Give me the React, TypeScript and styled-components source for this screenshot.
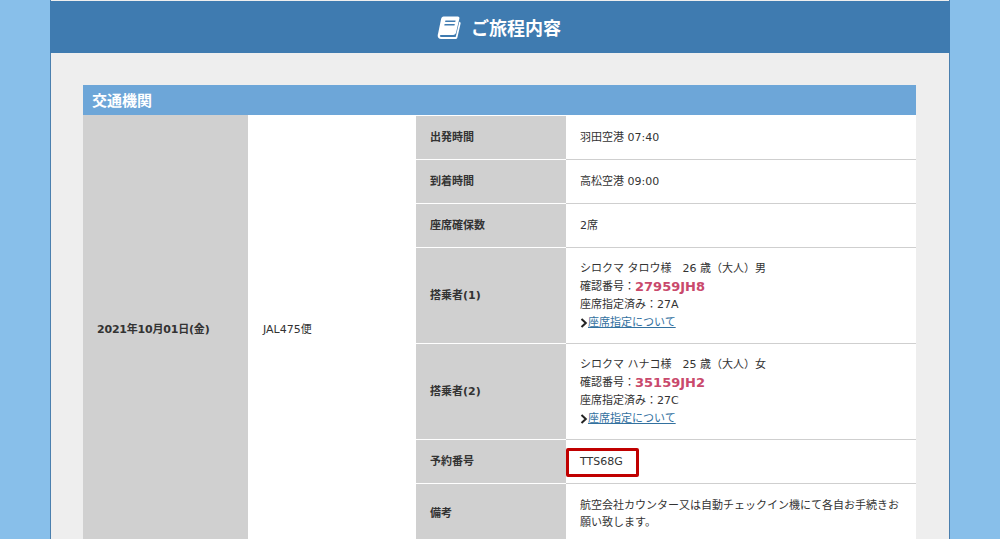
import styled, { createGlobalStyle } from "styled-components";

const GlobalStyle = createGlobalStyle`
  html, body {
    margin: 0;
    padding: 0;
    height: 539px;
    overflow: hidden;
    background: #88bfea;
    font-family: "DejaVu Sans", "Noto Sans CJK JP", sans-serif;
    color: #333;
  }
  * {
    box-sizing: border-box;
  }
`;

const rows = [
  { label: "出発時間", height: 44, text: "羽田空港 07:40" },
  { label: "到着時間", height: 44, text: "高松空港 09:00" },
  { label: "座席確保数", height: 44, text: "2席" },
];

const passengers = [
  { label: "搭乗者(1)", name: "シロクマ タロウ様　26 歳（大人）男", code: "27959JH8", seat: "27A" },
  { label: "搭乗者(2)", name: "シロクマ ハナコ様　25 歳（大人）女", code: "35159JH2", seat: "27C" },
];

function BookIcon() {
  return (
    <svg width="24" height="24" viewBox="0 0 24 24" aria-hidden="true">
      <path
        fill="#fff"
        d="M6.6 1.5h14.2c1.2 0 1.9 1 1.6 2.1l-3.3 14c-.4 1.5-1.4 2.4-3 2.4H4.4c-.9 0-1.5.3-1.5 1 0 .6.6.9 1.5.9h14.3l3.6-15.2.9.5c.4.3.5.8.4 1.3l-3.2 13.9c-.3 1-1.1 1.6-2.2 1.6H4.2C2 24 .6 22.6.7 20.6c0-.6.2-1.4.4-2l3-14.5c.3-1.5 1.2-2.6 2.5-2.6z"
      />
      <path fill="#3f7bb0" d="M8.4 5.6h10.2l-.3 1.5H8.1zM7.6 9h10.2l-.3 1.5H7.3z" />
    </svg>
  );
}

export default function App() {
  return (
    <>
      <GlobalStyle />
      <Page>
        <Header>
          <BookIcon />
          <Title>ご旅程内容</Title>
        </Header>
        <Content>
          <SectionTitle>交通機関</SectionTitle>
          <Table>
            <DateCell>2021年10月01日(金)</DateCell>
            <FlightCell>JAL475便</FlightCell>
            <Details>
              {rows.map((row) => (
                <Row key={row.label} $height={row.height}>
                  <Label>{row.label}</Label>
                  <Value>{row.text}</Value>
                </Row>
              ))}
              {passengers.map((p) => (
                <Row key={p.label} $height={96}>
                  <Label>{p.label}</Label>
                  <Value>
                    <Line>{p.name}</Line>
                    <Line>
                      確認番号：<Code>{p.code}</Code>
                    </Line>
                    <Line>座席指定済み：{p.seat}</Line>
                    <Line>
                      <Chevron viewBox="0 0 8 10" aria-hidden="true">
                        <path d="M1.5 1 L5.8 5 L1.5 9" />
                      </Chevron>
                      <SeatLink href="#">座席指定について</SeatLink>
                    </Line>
                  </Value>
                </Row>
              ))}
              <Row $height={44}>
                <Label>予約番号</Label>
                <Value>
                  <Highlight>TTS68G</Highlight>
                </Value>
              </Row>
              <Row $height={60}>
                <Label>備考</Label>
                <Note>航空会社カウンター又は自動チェックイン機にて各自お手続きお願い致します。</Note>
              </Row>
            </Details>
          </Table>
        </Content>
      </Page>
    </>
  );
}

const Page = styled.div`
  width: 900px;
  margin: 0 auto;
  padding-top: 1px;
  background: #eeeeee;
  border-left: 1px solid #4a7fae;
  border-right: 1px solid #4a7fae;
`;

const Header = styled.header`
  height: 52px;
  margin: 0 -1px;
  padding-right: 2px;
  display: flex;
  align-items: center;
  justify-content: center;
  gap: 10px;
  background: #3f7bb0;
`;

const Title = styled.h1`
  margin: 0;
  font-size: 18px;
  font-weight: 700;
  color: #fff;
`;

const Content = styled.main`
  padding: 32px 33px 0 32px;
`;

const SectionTitle = styled.h2`
  margin: 0;
  height: 30px;
  padding-left: 9px;
  font-size: 15px;
  line-height: 32px;
  font-weight: 700;
  color: #fff;
  background: #6da6d8;
`;

const Table = styled.div`
  display: flex;
  background: #fff;
`;

const DateCell = styled.div`
  width: 165px;
  display: flex;
  align-items: center;
  padding: 0 0 4px 14px;
  background: #d0d0d0;
  font-size: 11px;
  font-weight: 700;
  letter-spacing: -0.2px;
`;

const FlightCell = styled.div`
  width: 168px;
  display: flex;
  align-items: center;
  padding: 0 0 4px 15px;
  font-size: 11px;
`;

const Details = styled.div`
  flex: 1;
  padding-top: 1px;
`;

const Row = styled.div<{ $height: number }>`
  display: flex;
  height: ${({ $height }) => $height}px;
`;

const Label = styled.div`
  width: 150px;
  display: flex;
  align-items: center;
  padding: 0 0 3px 14px;
  margin-bottom: 1px;
  background: #d0d0d0;
  font-size: 11px;
  font-weight: 700;
`;

const Value = styled.div`
  flex: 1;
  display: flex;
  flex-direction: column;
  justify-content: center;
  align-items: flex-start;
  padding: 0 14px;
  border-bottom: 1px solid #cfcfcf;
  font-size: 11px;
  line-height: 18px;
`;

const Note = styled(Value)`
  line-height: 17px;
`;

const Line = styled.div`
  height: 18px;
  display: flex;
  align-items: center;
  white-space: pre;
`;

const Code = styled.span`
  font-size: 13px;
  font-weight: 700;
  color: #c9496c;
`;

const Chevron = styled.svg`
  width: 8px;
  height: 10px;
  fill: none;
  stroke: #222;
  stroke-width: 2;
`;

const SeatLink = styled.a`
  color: #33719f;
  text-decoration: underline;
`;

const Highlight = styled.span`
  position: relative;

  &::after {
    content: "";
    box-sizing: border-box;
    position: absolute;
    left: -14px;
    top: -5px;
    width: 73px;
    height: 29px;
    border: 3px solid #c00000;
    border-radius: 2px;
  }
`;
